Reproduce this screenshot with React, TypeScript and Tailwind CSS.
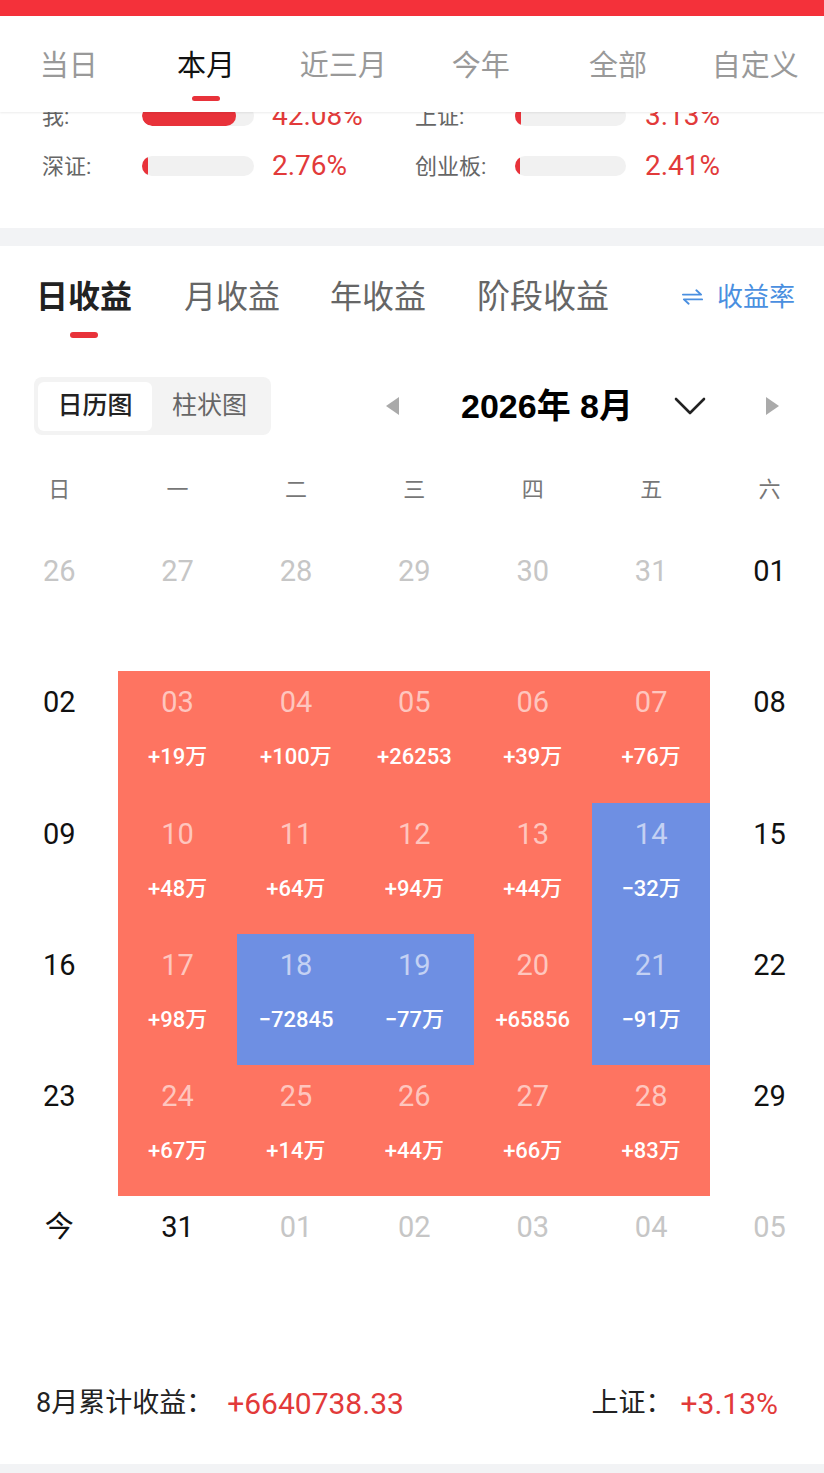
import React from "react";

const FONT = 'Roboto, "Noto Sans CJK SC", "Noto Sans", sans-serif';

type Cell = { d: string; kind: "gray" | "black" | "red" | "blue"; amt?: string };

const rows: Cell[][] = [
  [
    { d: "26", kind: "gray" },
    { d: "27", kind: "gray" },
    { d: "28", kind: "gray" },
    { d: "29", kind: "gray" },
    { d: "30", kind: "gray" },
    { d: "31", kind: "gray" },
    { d: "01", kind: "black" },
  ],
  [
    { d: "02", kind: "black" },
    { d: "03", kind: "red", amt: "+19万" },
    { d: "04", kind: "red", amt: "+100万" },
    { d: "05", kind: "red", amt: "+26253" },
    { d: "06", kind: "red", amt: "+39万" },
    { d: "07", kind: "red", amt: "+76万" },
    { d: "08", kind: "black" },
  ],
  [
    { d: "09", kind: "black" },
    { d: "10", kind: "red", amt: "+48万" },
    { d: "11", kind: "red", amt: "+64万" },
    { d: "12", kind: "red", amt: "+94万" },
    { d: "13", kind: "red", amt: "+44万" },
    { d: "14", kind: "blue", amt: "−32万" },
    { d: "15", kind: "black" },
  ],
  [
    { d: "16", kind: "black" },
    { d: "17", kind: "red", amt: "+98万" },
    { d: "18", kind: "blue", amt: "−72845" },
    { d: "19", kind: "blue", amt: "−77万" },
    { d: "20", kind: "red", amt: "+65856" },
    { d: "21", kind: "blue", amt: "−91万" },
    { d: "22", kind: "black" },
  ],
  [
    { d: "23", kind: "black" },
    { d: "24", kind: "red", amt: "+67万" },
    { d: "25", kind: "red", amt: "+14万" },
    { d: "26", kind: "red", amt: "+44万" },
    { d: "27", kind: "red", amt: "+66万" },
    { d: "28", kind: "red", amt: "+83万" },
    { d: "29", kind: "black" },
  ],
  [
    { d: "今", kind: "black" },
    { d: "31", kind: "black" },
    { d: "01", kind: "gray" },
    { d: "02", kind: "gray" },
    { d: "03", kind: "gray" },
    { d: "04", kind: "gray" },
    { d: "05", kind: "gray" },
  ],
];

function CalCell({ c }: { c: Cell }) {
  const bg =
    c.kind === "red" ? "bg-[#fe7461]" : c.kind === "blue" ? "bg-[#6e8fe3]" : "bg-white";
  const numColor =
    c.kind === "gray"
      ? "text-[#c6c6c6]"
      : c.kind === "black"
      ? "text-[#111111]"
      : "text-white/60";
  return (
    <div className={`h-[131.25px] flex flex-col items-center ${bg}`}>
      <div className={`pt-[13px] text-[29px] leading-[36px] ${numColor}`}>{c.d}</div>
      {c.amt && (
        <div className="mt-[23px] text-[22px] leading-[28px] font-medium text-white">{c.amt}</div>
      )}
    </div>
  );
}

function StatRow({
  l1,
  f1,
  p1,
  l2,
  f2,
  p2,
}: {
  l1: string;
  f1: number;
  p1: string;
  l2: string;
  f2: number;
  p2: string;
}) {
  return (
    <div className="h-[50px] flex items-center">
      <div className="w-[142px] pl-[42px] text-[22px] text-[#666666] whitespace-nowrap">{l1}</div>
      <div className="w-[112px] h-[20px] rounded-full bg-[#f1f1f1] overflow-hidden">
        <div className="h-full rounded-full bg-[#e8323a]" style={{ width: `${f1}px` }} />
      </div>
      <div className="ml-[18px] w-[143px] text-[28px] text-[#e23a3a]">{p1}</div>
      <div className="w-[100px] text-[22px] text-[#666666] whitespace-nowrap">{l2}</div>
      <div className="w-[111px] h-[20px] rounded-full bg-[#f1f1f1] overflow-hidden">
        <div className="h-full rounded-full bg-[#e8323a]" style={{ width: `${f2}px` }} />
      </div>
      <div className="ml-[19px] text-[28px] text-[#e23a3a]">{p2}</div>
    </div>
  );
}

export default function App() {
  const topTabs = ["当日", "本月", "近三月", "今年", "全部", "自定义"];
  const weekdays = ["日", "一", "二", "三", "四", "五", "六"];
  return (
    <div className="w-[824px] min-h-[1473px] bg-[#f2f3f5] overflow-hidden" style={{ fontFamily: FONT }}>
      {/* red header */}
      <div className="h-[16px] bg-[#f4313a]" />
      {/* top tab bar */}
      <div className="relative z-10 h-[96px] bg-white shadow-[0_1px_2px_rgba(0,0,0,0.08)] flex">
        {topTabs.map((t, i) => (
          <div key={t} className="flex-1 flex flex-col items-center">
            <div
              className={`mt-[31px] text-[29px] leading-[38px] ${
                i === 1 ? "text-[#111111]" : "text-[#999999]"
              }`}
            >
              {t}
            </div>
            {i === 1 && <div className="mt-[11px] w-[28px] h-[5px] rounded-full bg-[#e8323a]" />}
          </div>
        ))}
      </div>
      {/* stats (partially hidden under tab bar) */}
      <div className="h-[116px] bg-white overflow-hidden">
        <div className="-mt-[21px]">
          <StatRow l1="我:" f1={94} p1="42.08%" l2="上证:" f2={6} p2="3.13%" />
          <StatRow l1="深证:" f1={6} p1="2.76%" l2="创业板:" f2={5} p2="2.41%" />
        </div>
      </div>
      <div className="h-[18px]" />
      {/* main section */}
      <div className="bg-white pb-[1px]">
        {/* section tabs */}
        <div className="h-[102px] flex items-start pt-[31px]">
          <div className="ml-[36px] flex flex-col items-center">
            <div className="text-[32px] leading-[40px] font-bold text-[#222222]">日收益</div>
            <div className="mt-[15px] w-[28px] h-[6px] rounded-full bg-[#e8323a]" />
          </div>
          <div className="ml-[52px] text-[32px] leading-[40px] text-[#666666]">月收益</div>
          <div className="ml-[50px] text-[32px] leading-[40px] text-[#666666]">年收益</div>
          <div className="ml-[51px] text-[33px] leading-[40px] text-[#666666]">阶段收益</div>
          <div className="ml-[72px] flex items-center h-[40px] text-[26px] text-[#4a8fe0]">
            <svg width="23" height="18" viewBox="0 0 24 18" fill="none" stroke="#4a8fe0" strokeWidth="2" strokeLinecap="round" strokeLinejoin="round">
              <path d="M2 6.5H21L16 2" />
              <path d="M22 11.5H3L8 16" />
            </svg>
            <span className="ml-[13px]">收益率</span>
          </div>
        </div>
        {/* control row */}
        <div className="mt-[29px] h-[58px] flex items-center">
          <div className="ml-[34px] w-[237px] h-[58px] rounded-[8px] bg-[#f3f3f3] flex items-center px-[4px]">
            <div className="w-[114px] h-[49px] rounded-[6px] bg-white flex items-center justify-center text-[25px] text-[#222222] font-medium">
              日历图
            </div>
            <div className="flex-1 text-center text-[25px] text-[#666666]">柱状图</div>
          </div>
          <svg className="ml-[113px]" width="16" height="20" viewBox="0 0 16 20">
            <path d="M15 1V19L2 10Z" fill="#aaaaaa" />
          </svg>
          <div
            className="ml-[61px] w-[175px] text-[34px] font-bold text-black whitespace-nowrap"
            style={{ fontFamily: '"Liberation Sans", "Noto Sans CJK SC", sans-serif' }}
          >
            2026年 8月
          </div>
          <svg className="ml-[38px]" width="32" height="20" viewBox="0 0 32 20" fill="none" stroke="#222222" strokeWidth="2.6" strokeLinecap="round" strokeLinejoin="round">
            <path d="M2 3L16 17L30 3" />
          </svg>
          <svg className="ml-[59px]" width="16" height="20" viewBox="0 0 16 20">
            <path d="M1 1V19L14 10Z" fill="#aaaaaa" />
          </svg>
        </div>
        {/* calendar */}
        <div className="mt-[25px] w-[824px] overflow-hidden">
          <div className="grid grid-cols-[repeat(7,118.4px)] h-[80px]">
            {weekdays.map((w) => (
              <div key={w} className="pt-[15px] text-center text-[22px] leading-[30px] text-[#777777]">
                {w}
              </div>
            ))}
          </div>
          <div className="grid grid-cols-[repeat(7,118.4px)]">
            {rows.flat().map((c, i) => (
              <CalCell key={i} c={c} />
            ))}
          </div>
        </div>
        {/* summary */}
        <div className="h-[135px] flex items-center justify-between pt-[16px] pl-[36px] pr-[46px]">
          <div className="flex items-center">
            <span className="text-[27px] text-[#222222]">8月累计收益：</span>
            <span className="ml-[14px] text-[#e23a3a] text-[30px]">+6640738.33</span>
          </div>
          <div className="flex items-center">
            <span className="text-[27px] text-[#222222]">上证：</span>
            <span className="ml-[8px] text-[#e23a3a] text-[30px]">+3.13%</span>
          </div>
        </div>
      </div>
    </div>
  );
}
